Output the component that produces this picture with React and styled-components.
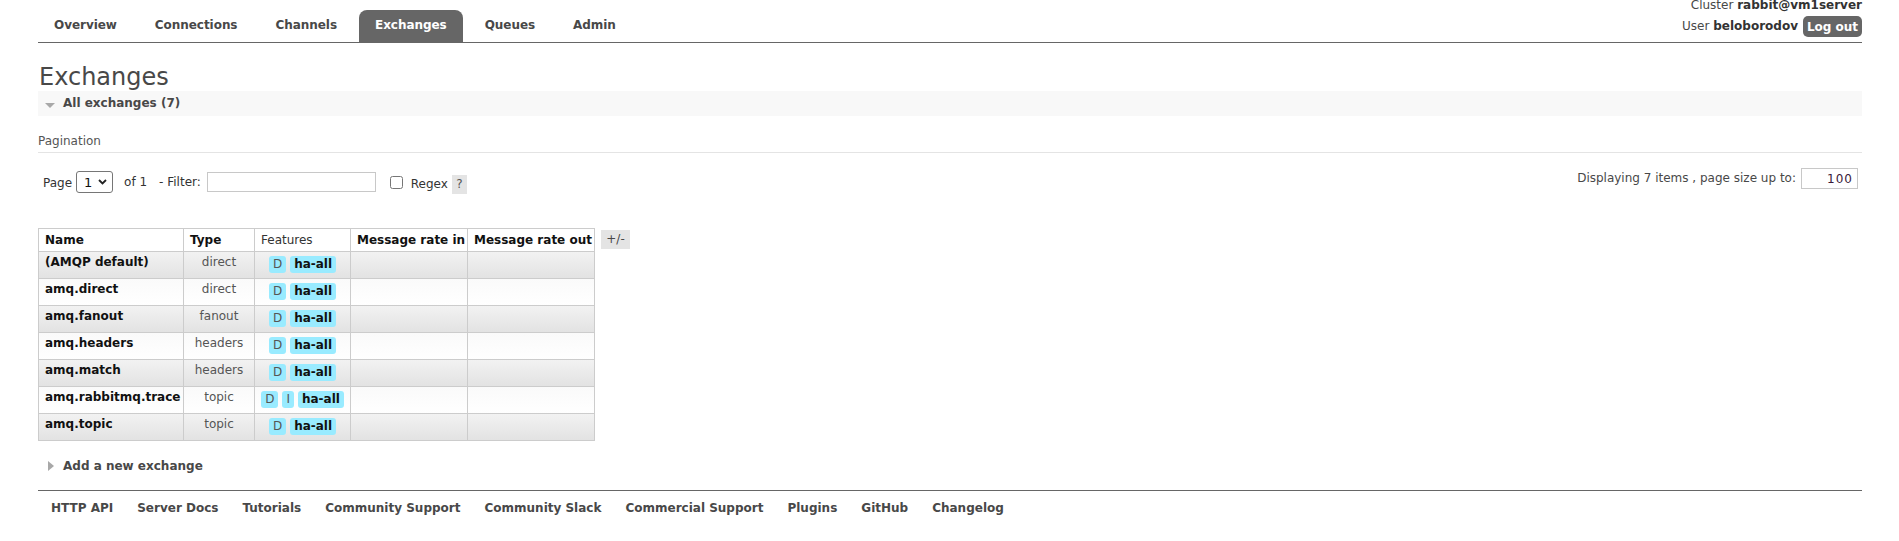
import React from "react";
import styled, { createGlobalStyle } from "styled-components";

const Global = createGlobalStyle`
  html, body { margin: 0; padding: 0; background: #fff; }
  body {
    font-family: "DejaVu Sans", Verdana, sans-serif;
    font-size: 12px;
    line-height: 15px;
    color: #484848;
  }
  * { box-sizing: border-box; }
`;

const Page = styled.div`
  margin: 0 37px 0 38px;
`;

const Header = styled.header`
  display: flex;
  justify-content: space-between;
  align-items: flex-end;
  height: 43px;
  border-bottom: 1px solid #666;
`;

const Menu = styled.ul`
  display: flex;
  list-style: none;
  margin: 0;
  padding: 0;
`;

const MenuItem = styled.li`
  padding-right: 1px;
`;

const MenuLink = styled.a`
  display: block;
  height: 32px;
  padding: 8px 16px 0;
  margin-right: 5px;
  font-weight: bold;
  letter-spacing: -0.05px;
  color: ${(p) => (p.$selected ? "#fff" : "#484848")};
  background: ${(p) => (p.$selected ? "#666" : "transparent")};
  border-radius: 8px 8px 0 0;
  text-decoration: none;
  cursor: pointer;
`;

const UserInfo = styled.div`
  display: flex;
  flex-direction: column;
  align-items: flex-end;
  margin-bottom: 5px;
`;

const InfoLine = styled.div`
  display: flex;
  align-items: center;
  gap: 5px;
  margin-bottom: ${(p) => p.$mb || 0}px;
  white-space: nowrap;
`;

const Strong = styled.b`
  color: #333;
`;

const LogoutButton = styled.button`
  font-family: "DejaVu Sans", Verdana, sans-serif;
  font-size: 12px;
  font-weight: bold;
  color: #fff;
  background: #666;
  border: none;
  border-radius: 5px;
  height: 21px;
  width: 59px;
  padding: 0;
  cursor: pointer;
`;

const Title = styled.h1`
  font-size: 24px;
  line-height: 27px;
  font-weight: normal;
  margin: 21px 0 0 1px;
  color: #484848;
`;

const SectionHeader = styled.h2`
  position: relative;
  font-size: 12px;
  line-height: 15px;
  font-weight: bold;
  margin: ${(p) => p.$mt || 0}px 0 0;
  padding: 5px 5px 5px 25px;
  background: ${(p) => (p.$open ? "#f8f8f8" : "transparent")};
  color: #484848;
  cursor: pointer;
`;

const Arrow = styled.svg`
  position: absolute;
  left: ${(p) => p.$x}px;
  top: ${(p) => p.$y}px;
`;

const SubHeader = styled.h3`
  font-size: 12px;
  line-height: 15px;
  font-weight: normal;
  margin: 18px 0 0;
  padding: 0 0 3px;
  border-bottom: 1px solid #e4e4e4;
  color: #555;
`;

const Controls = styled.div`
  display: flex;
  justify-content: space-between;
  align-items: flex-start;
  margin-top: 15px;
`;

const LeftControls = styled.div`
  display: flex;
  align-items: center;
  height: 22px;
  margin-top: 3px;
  padding-left: 5px;
`;

const Label = styled.span`
  margin-left: ${(p) => p.$ml || 0}px;
  margin-right: ${(p) => p.$mr || 0}px;
  color: #333;
  white-space: nowrap;
  position: relative;
  top: ${(p) => p.$dy || 0}px;
`;

const SelectWrap = styled.span`
  position: relative;
  display: inline-block;
  width: 37px;
  height: 22px;
`;

const Select = styled.select`
  appearance: none;
  -webkit-appearance: none;
  width: 37px;
  height: 22px;
  border: 1px solid #767676;
  border-radius: 3px;
  background: #fff;
  font-family: "DejaVu Sans", Verdana, sans-serif;
  font-size: 13px;
  color: #111;
  padding: 0 0 0 7px;
`;

const Chevron = styled.svg`
  position: absolute;
  right: 6px;
  top: 8px;
  pointer-events: none;
`;

const FilterInput = styled.input`
  width: 169px;
  height: 20px;
  margin-left: 6px;
  border: 1px solid #c8c8c8;
  padding: 0 3px;
  font-family: "DejaVu Sans", Verdana, sans-serif;
  font-size: 12px;
`;

const CheckBox = styled.input`
  width: 13px;
  height: 13px;
  margin: 0 0 0 14px;
`;

const HelpBadge = styled.span`
  display: inline-flex;
  align-items: center;
  justify-content: center;
  width: 15px;
  height: 19px;
  margin-left: 4px;
  background: #e4e4e4;
  color: #555;
  position: relative;
  top: 2px;
`;

const RightControls = styled.div`
  display: flex;
  align-items: center;
  gap: 5px;
  height: 21px;
  margin-right: 4px;
  color: #484848;
`;

const SizeInput = styled.input`
  width: 57px;
  height: 21px;
  border: 1px solid #c8c8c8;
  text-align: right;
  padding: 0 4px 0 0;
  font-family: "DejaVu Sans", Verdana, sans-serif;
  letter-spacing: 1px;
  font-size: 12px;
  color: #3a1a3a;
`;

const TableArea = styled.div`
  display: flex;
  align-items: flex-start;
  gap: 6px;
  margin-top: 35px;
`;

const Table = styled.table`
  border-collapse: collapse;
  table-layout: fixed;
  width: 556px;
  border: 1px solid #ccc;
`;

const Th = styled.th`
  height: 23px;
  padding: 0 6px;
  text-align: left;
  font-weight: ${(p) => (p.$normal ? "normal" : "bold")};
  color: ${(p) => (p.$normal ? "#333" : "#111")};
  border: 1px solid #ccc;
  background: #fff;
  white-space: nowrap;
  overflow: hidden;
`;

const Tr = styled.tr`
  background: ${(p) =>
    p.$alt
      ? "linear-gradient(#fafafa, #ffffff)"
      : "linear-gradient(#f2f2f2, #e2e2e2)"};
`;

const Td = styled.td`
  height: 27px;
  padding: 3px 6px 0;
  vertical-align: top;
  border: 1px solid #ccc;
  text-align: ${(p) => (p.$center ? "center" : "left")};
  font-weight: ${(p) => (p.$bold ? "bold" : "normal")};
  color: ${(p) => (p.$bold ? "#111" : "#555")};
  white-space: nowrap;
`;

const Badges = styled.div`
  display: flex;
  justify-content: center;
  gap: 4px;
  margin-top: 1px;
`;

const Badge = styled.span`
  display: inline-block;
  height: 17px;
  line-height: 17px;
  padding: 0 4px;
  border-radius: 3px;
  background: #99ebff;
  font-weight: ${(p) => (p.$bold ? "bold" : "normal")};
  color: ${(p) => (p.$bold ? "#111" : "#555")};
`;

const ColumnToggle = styled.span`
  display: inline-flex;
  align-items: center;
  justify-content: center;
  width: 29px;
  height: 19px;
  margin-top: 2px;
  background: #e4e4e4;
  color: #484848;
`;

const Footer = styled.footer`
  margin-top: 11px;
  border-top: 1px solid #666;
`;

const FooterList = styled.ul`
  display: flex;
  gap: 24px;
  list-style: none;
  margin: 0;
  padding: 10px 0 0 13px;
`;

const FooterLink = styled.a`
  font-weight: bold;
  color: #484848;
  text-decoration: none;
  cursor: pointer;
`;

const tabs = ["Overview", "Connections", "Channels", "Exchanges", "Queues", "Admin"];

const exchanges = [
  { name: "(AMQP default)", type: "direct", feats: ["D"] },
  { name: "amq.direct", type: "direct", feats: ["D"] },
  { name: "amq.fanout", type: "fanout", feats: ["D"] },
  { name: "amq.headers", type: "headers", feats: ["D"] },
  { name: "amq.match", type: "headers", feats: ["D"] },
  { name: "amq.rabbitmq.trace", type: "topic", feats: ["D", "I"] },
  { name: "amq.topic", type: "topic", feats: ["D"] },
];

const footerLinks = [
  "HTTP API",
  "Server Docs",
  "Tutorials",
  "Community Support",
  "Community Slack",
  "Commercial Support",
  "Plugins",
  "GitHub",
  "Changelog",
];

export default function App() {
  return (
    <>
      <Global />
      <Page>
        <Header>
          <Menu>
            {tabs.map((t) => (
              <MenuItem key={t}>
                <MenuLink $selected={t === "Exchanges"}>{t}</MenuLink>
              </MenuItem>
            ))}
          </Menu>
          <UserInfo>
            <InfoLine $mb={3}>
              <span>
                Cluster <Strong>rabbit@vm1server</Strong>
              </span>
            </InfoLine>
            <InfoLine>
              <span>
                User <Strong>beloborodov</Strong>
              </span>
              <LogoutButton>Log out</LogoutButton>
            </InfoLine>
          </UserInfo>
        </Header>

        <Title>Exchanges</Title>
        <SectionHeader $open>
          <Arrow $x={7} $y={12} width="10" height="5" viewBox="0 0 10 5">
            <polygon points="0,0 10,0 5,5" fill="#a8a8a8" />
          </Arrow>
          All exchanges (7)
        </SectionHeader>

        <SubHeader>Pagination</SubHeader>
        <Controls>
          <LeftControls>
            <Label $mr={4} $dy={1}>Page</Label>
            <SelectWrap>
              <Select defaultValue="1">
                <option value="1">1</option>
              </Select>
              <Chevron width="9" height="6" viewBox="0 0 9 6">
                <polyline points="1,1 4.5,4.5 8,1" fill="none" stroke="#222" strokeWidth="1.8" />
              </Chevron>
            </SelectWrap>
            <Label $ml={11}>of 1</Label>
            <Label $ml={12}>- Filter:</Label>
            <FilterInput type="text" />
            <CheckBox type="checkbox" />
            <Label $ml={8} $dy={2}>Regex</Label>
            <HelpBadge>?</HelpBadge>
          </LeftControls>
          <RightControls>
            <span>Displaying 7 items , page size up to:</span>
            <SizeInput type="text" defaultValue="100" />
          </RightControls>
        </Controls>

        <TableArea>
          <Table>
            <colgroup>
              <col style={{ width: 145 }} />
              <col style={{ width: 71 }} />
              <col style={{ width: 96 }} />
              <col style={{ width: 117 }} />
              <col style={{ width: 127 }} />
            </colgroup>
            <thead>
              <tr>
                <Th>Name</Th>
                <Th>Type</Th>
                <Th $normal>Features</Th>
                <Th>Message rate in</Th>
                <Th>Message rate out</Th>
              </tr>
            </thead>
            <tbody>
              {exchanges.map((e, i) => (
                <Tr key={e.name} $alt={i % 2 === 1}>
                  <Td $bold>{e.name}</Td>
                  <Td $center>{e.type}</Td>
                  <Td>
                    <Badges>
                      {e.feats.map((f) => (
                        <Badge key={f}>{f}</Badge>
                      ))}
                      <Badge $bold>ha-all</Badge>
                    </Badges>
                  </Td>
                  <Td />
                  <Td />
                </Tr>
              ))}
            </tbody>
          </Table>
          <ColumnToggle>+/-</ColumnToggle>
        </TableArea>

        <SectionHeader $mt={13}>
          <Arrow $x={10} $y={7} width="6" height="10" viewBox="0 0 6 10">
            <polygon points="0,0 6,5 0,10" fill="#a8a8a8" />
          </Arrow>
          Add a new exchange
        </SectionHeader>

        <Footer>
          <FooterList>
            {footerLinks.map((l) => (
              <li key={l}>
                <FooterLink>{l}</FooterLink>
              </li>
            ))}
          </FooterList>
        </Footer>
      </Page>
    </>
  );
}
